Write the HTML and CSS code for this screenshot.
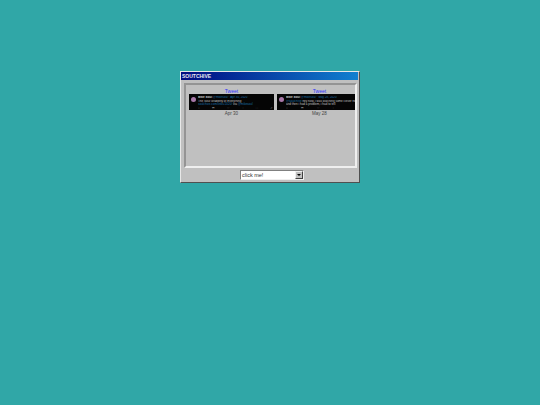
FILE: index.html
```html
<!DOCTYPE html>
<html lang="en">
<head>
    <meta charset="UTF-8">
    <title>SOUTCHIVE</title>
    <link rel="stylesheet" href="styles.css">
</head>
<body>
    <div class="window">
        <div class="title-bar">SOUTCHIVE</div>
        <div class="group">
            <div class="item">
                <a class="tweet-link" href="#">Tweet</a>
                <div class="tweet">
                    <div class="avatar"></div>
                    <div class="tweet-body">
                        <div class="tweet-head"><b>Mike Soul</b> <span class="blue">@mikesoul · Apr 30, 2020</span></div>
                        <div class="tweet-text">The Soul Grabbitty of Everything <span class="blue">soulchive.com/links/2020/</span> via <span class="blue">@mikesoul</span></div>
                        <div class="tweet-actions"><span>○</span><span>⇄</span><span>♡</span><span>↑</span><span>□</span><span>↗</span></div>
                    </div>
                </div>
                <div class="date">Apr 30</div>
            </div>
            <div class="item">
                <a class="tweet-link" href="#">Tweet</a>
                <div class="tweet">
                    <div class="avatar"></div>
                    <div class="tweet-body">
                        <div class="tweet-head"><b>Mike Soul</b> <span class="blue">@mikesoul · May 28, 2020</span></div>
                        <div class="tweet-text"><span class="blue">@soulchive</span> hey now, i was watching some clever news and then i had a problem, i had to tell</div>
                        <div class="tweet-actions short"><span>○</span><span>⇄</span><span>♡</span><span>↑</span></div>
                    </div>
                </div>
                <div class="date">May 28</div>
            </div>
        </div>
        <div class="picker">
            <div class="select">
                <span class="select-text">click me!</span>
                <span class="select-btn"><span class="arrow"></span></span>
            </div>
        </div>
    </div>
</body>
</html>
```

FILE: styles.css
```css
body {
    margin: 0;
    height: 405px;
    overflow: hidden;
    background-color: #30a7a7;
    display: flex;
    flex-direction: column;
    align-items: center;
    padding-top: 71px;
    box-sizing: border-box;
    font-family: "Liberation Sans", Arial, sans-serif;
}

.window {
    width: 180px;
    height: 112px;
    box-sizing: border-box;
    padding-right: 1px;
    background-color: #c0c0c0;
    border-top: 1px solid #e8e8e8;
    border-left: 1px solid #e8e8e8;
    border-right: 1px solid #505050;
    border-bottom: 1px solid #505050;
    display: flex;
    flex-direction: column;
}

.title-bar {
    height: 8px;
    padding-left: 1px;
    background: linear-gradient(to right, #000a80, #1080d0);
    color: #e8e8f0;
    font-size: 5px;
    font-weight: bold;
    line-height: 8px;
}

.group {
    height: 85px;
    box-sizing: border-box;
    margin: 3px 1px 0 3px;
    padding: 4px 0 0 3px;
    border-top: 2px solid #949494;
    border-left: 2px solid #949494;
    border-right: 2px solid #efefef;
    border-bottom: 2px solid #efefef;
    display: flex;
    gap: 3px;
    overflow: hidden;
}

.item {
    width: 85px;
    flex-shrink: 0;
    display: flex;
    flex-direction: column;
    align-items: center;
}

.tweet-link {
    height: 5px;
    color: #3030ff;
    font-size: 5px;
    line-height: 5px;
}

.tweet {
    width: 85px;
    height: 16px;
    box-sizing: border-box;
    padding: 2px 1px 0 2px;
    background-color: #050505;
    display: flex;
    gap: 2px;
    overflow: hidden;
}

.avatar {
    width: 5px;
    height: 5px;
    margin-top: 1px;
    flex-shrink: 0;
    border-radius: 50%;
    background-color: #a878a8;
}

.tweet-body {
    min-width: 0;
    flex: 1;
    color: #c0c0c0;
    font-size: 3px;
    line-height: 3px;
}

.tweet-head {
    height: 3px;
    white-space: nowrap;
    overflow: hidden;
    color: #d0d0d0;
}

.tweet-text {
    height: 6px;
    margin-top: 1px;
    overflow: hidden;
}

.tweet-actions {
    display: flex;
    justify-content: space-between;
    height: 3px;
    margin-top: 1px;
    overflow: hidden;
    color: #707070;
}

.tweet-actions.short {
    width: 48px;
}

.blue {
    color: #1a6fa8;
}

.date {
    margin-top: 1px;
    color: #444;
    font-size: 4.5px;
    line-height: 6px;
}

.picker {
    display: flex;
    justify-content: center;
    margin-top: 2px;
    padding-left: 5px;
}

.select {
    width: 64px;
    height: 10px;
    box-sizing: border-box;
    background-color: #fff;
    border-top: 1px solid #808080;
    border-left: 1px solid #808080;
    border-right: 1px solid #efefef;
    border-bottom: 1px solid #efefef;
    display: flex;
    align-items: center;
    justify-content: space-between;
}

.select-text {
    padding-left: 1px;
    color: #333;
    font-size: 5.5px;
    line-height: 8px;
}

.select-btn {
    width: 8px;
    height: 8px;
    box-sizing: border-box;
    background-color: #c0c0c0;
    border-top: 1px solid #efefef;
    border-left: 1px solid #efefef;
    border-right: 1px solid #404040;
    border-bottom: 1px solid #404040;
    display: flex;
    align-items: center;
    justify-content: center;
}

.arrow {
    width: 0;
    height: 0;
    border-left: 2px solid transparent;
    border-right: 2px solid transparent;
    border-top: 2px solid #000;
}
```
